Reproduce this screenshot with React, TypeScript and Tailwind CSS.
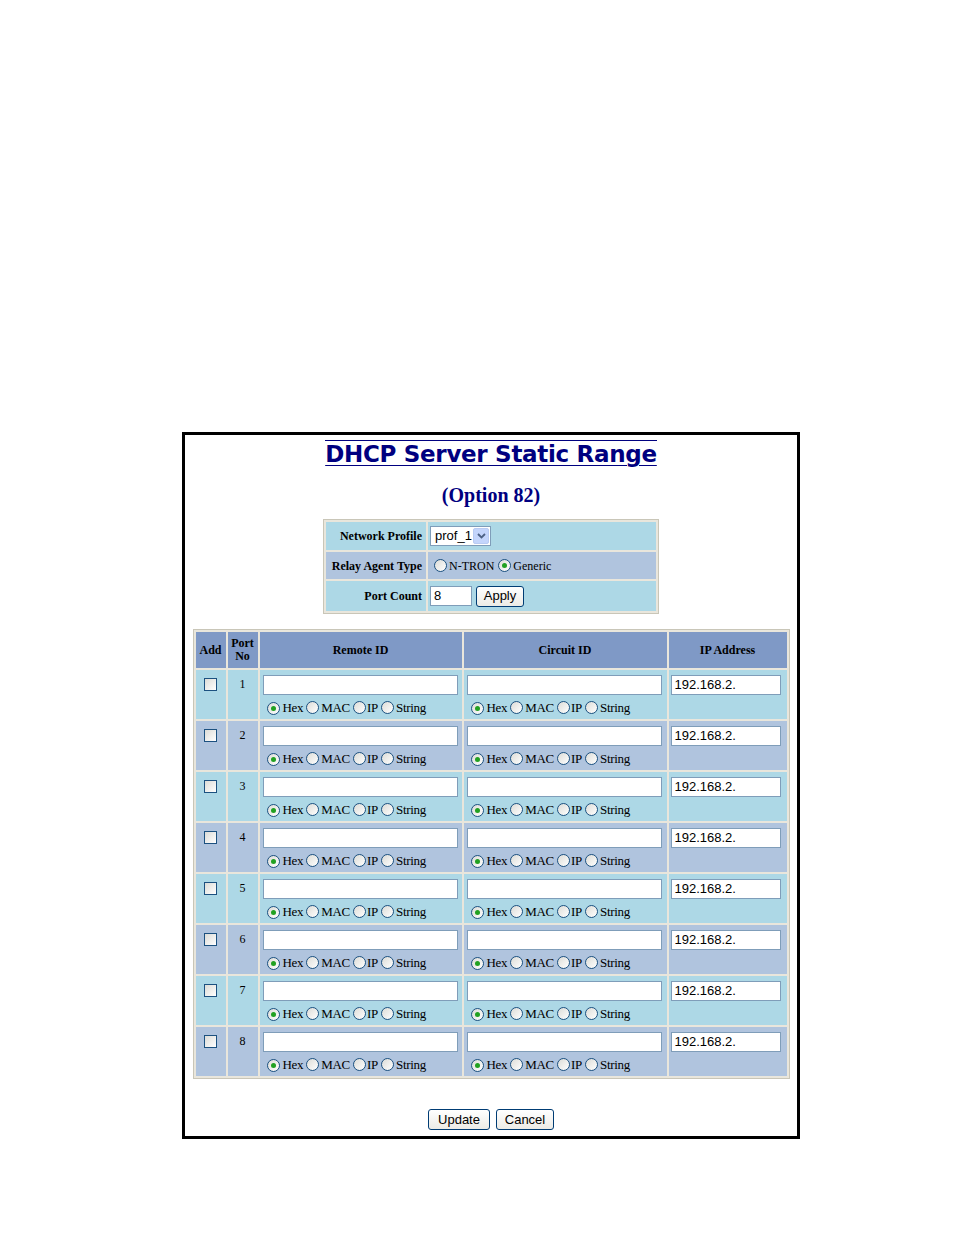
import React from 'react';

const serif = { fontFamily: '"Liberation Serif", "Times New Roman", serif' };
const sans = { fontFamily: '"Liberation Sans", Arial, sans-serif' };

function Radio({ checked }: { checked?: boolean }) {
  return (
    <span className="inline-flex h-[13px] w-[13px] shrink-0 items-center justify-center rounded-full border border-[#1c5180] bg-gradient-to-br from-[#dcdcd7] to-white">
      {checked && <span className="h-[5px] w-[5px] rounded-full bg-[#21a121]" />}
    </span>
  );
}

function Checkbox() {
  return <span className="inline-block h-[13px] w-[13px] border border-[#1c5180] bg-gradient-to-br from-[#dcdcd7] to-white" />;
}

function TextBox({ w, value = '' }: { w: string; value?: string }) {
  return (
    <div
      className={`${w} flex h-[20px] items-center border border-[#7f9db9] bg-white px-[3px] text-[13px] text-black`}
      style={sans}
    >
      {value}
    </div>
  );
}

function XpButton({ label, w }: { label: string; w: string }) {
  return (
    <div
      className={`${w} flex h-[21px] items-center justify-center rounded-[3px] border border-[#003c74] bg-gradient-to-b from-white to-[#ecebe6] text-[13px] text-black`}
      style={sans}
    >
      {label}
    </div>
  );
}

function EncodingChoice() {
  return (
    <div className="mt-[5px] flex items-center text-[13px] leading-none tracking-[-0.3px] text-black" style={serif}>
      <span className="ml-[4px]"><Radio checked /></span>
      <span className="ml-[3px] mr-[3px]">Hex</span>
      <Radio />
      <span className="ml-[2px] mr-[3px]">MAC</span>
      <Radio />
      <span className="ml-[1px] mr-[3px]">IP</span>
      <Radio />
      <span className="ml-[2px]">String</span>
    </div>
  );
}

const ports = [1, 2, 3, 4, 5, 6, 7, 8];

export default function App() {
  return (
    <div className="min-h-[1235px] w-[954px] bg-white pt-[432px]">
      <div className="ml-[182px] flex h-[707px] w-[618px] flex-col items-center border-[3px] border-black">
        {/* Title */}
        <h1
          className="mt-[5px] border-t border-[#000080] text-[23px] font-bold leading-[26px] text-[#000080] underline decoration-[1px] underline-offset-[3px]"
          style={{ fontFamily: '"DejaVu Sans", Verdana, sans-serif', letterSpacing: '-0.3px' }}
        >
          DHCP Server Static Range
        </h1>
        <div className="mt-[16px] text-[20px] font-bold leading-[24px] text-[#000080]" style={serif}>
          (Option 82)
        </div>

        {/* Profile settings */}
        <table
          className="mt-[12px] w-[336px] border-separate border-spacing-[2px] border border-[#c9c6b8] bg-[#e9e6dc] text-[12px] text-black"
          style={serif}
        >
          <tbody>
            <tr className="h-[28px] bg-[#add8e6]">
              <td className="w-[100px] pr-[4px] text-right font-bold">Network Profile</td>
              <td className="pl-[2px]">
                <div className="flex h-[20px] w-[61px] items-center border border-[#7f9db9] bg-white" style={sans}>
                  <span className="flex-1 pl-[4px] text-[13px]">prof_1</span>
                  <span className="mr-[1px] flex h-[16px] w-[16px] items-center justify-center rounded-[2px] border border-[#b9cbf3] bg-[#c4d5fc]">
                    <svg width="9" height="6" viewBox="0 0 9 6">
                      <path d="M1 1 L4.5 4.5 L8 1" fill="none" stroke="#4d6185" strokeWidth="1.8" />
                    </svg>
                  </span>
                </div>
              </td>
            </tr>
            <tr className="h-[27px] bg-[#b0c4de]">
              <td className="pr-[4px] text-right font-bold">Relay Agent Type</td>
              <td className="pl-[6px]">
                <div className="flex items-center">
                  <Radio />
                  <span className="ml-[2px] mr-[4px]">N-TRON</span>
                  <Radio checked />
                  <span className="ml-[2px]">Generic</span>
                </div>
              </td>
            </tr>
            <tr className="h-[30px] bg-[#add8e6]">
              <td className="pr-[4px] text-right font-bold">Port Count</td>
              <td className="pl-[2px]">
                <div className="flex items-center gap-[4px]">
                  <TextBox w="w-[42px]" value="8" />
                  <XpButton label="Apply" w="w-[48px]" />
                </div>
              </td>
            </tr>
          </tbody>
        </table>

        {/* Port table */}
        <table
          className="mt-[15px] w-[597px] border-separate border-spacing-[2px] border border-[#c9c6b8] bg-[#e9e6dc] text-[12px] text-black"
          style={serif}
        >
          <thead>
            <tr className="h-[36px] bg-[#7f99c6] font-bold leading-[13px]">
              <th className="w-[30px]">Add</th>
              <th className="w-[30px]">
                Port
                <br />
                No
              </th>
              <th className="w-[202px]">Remote ID</th>
              <th className="w-[203px]">Circuit ID</th>
              <th>IP Address</th>
            </tr>
          </thead>
          <tbody>
            {ports.map((p) => (
              <tr key={p} className={`h-[49px] align-top ${p % 2 === 1 ? 'bg-[#add8e6]' : 'bg-[#b0c4de]'}`}>
                <td className="pt-[8px] text-center">
                  <Checkbox />
                </td>
                <td className="pt-[5px] text-center text-[12px]">{p}</td>
                <td className="pl-[3px] pt-[5px]">
                  <TextBox w="w-[195px]" />
                  <EncodingChoice />
                </td>
                <td className="pl-[3px] pt-[5px]">
                  <TextBox w="w-[195px]" />
                  <EncodingChoice />
                </td>
                <td className="pl-[2px] pt-[5px]">
                  <TextBox w="w-[110px]" value="192.168.2." />
                </td>
              </tr>
            ))}
          </tbody>
        </table>

        <div className="mt-[30px] flex gap-[6px]">
          <XpButton label="Update" w="w-[62px]" />
          <XpButton label="Cancel" w="w-[58px]" />
        </div>
      </div>
    </div>
  );
}
